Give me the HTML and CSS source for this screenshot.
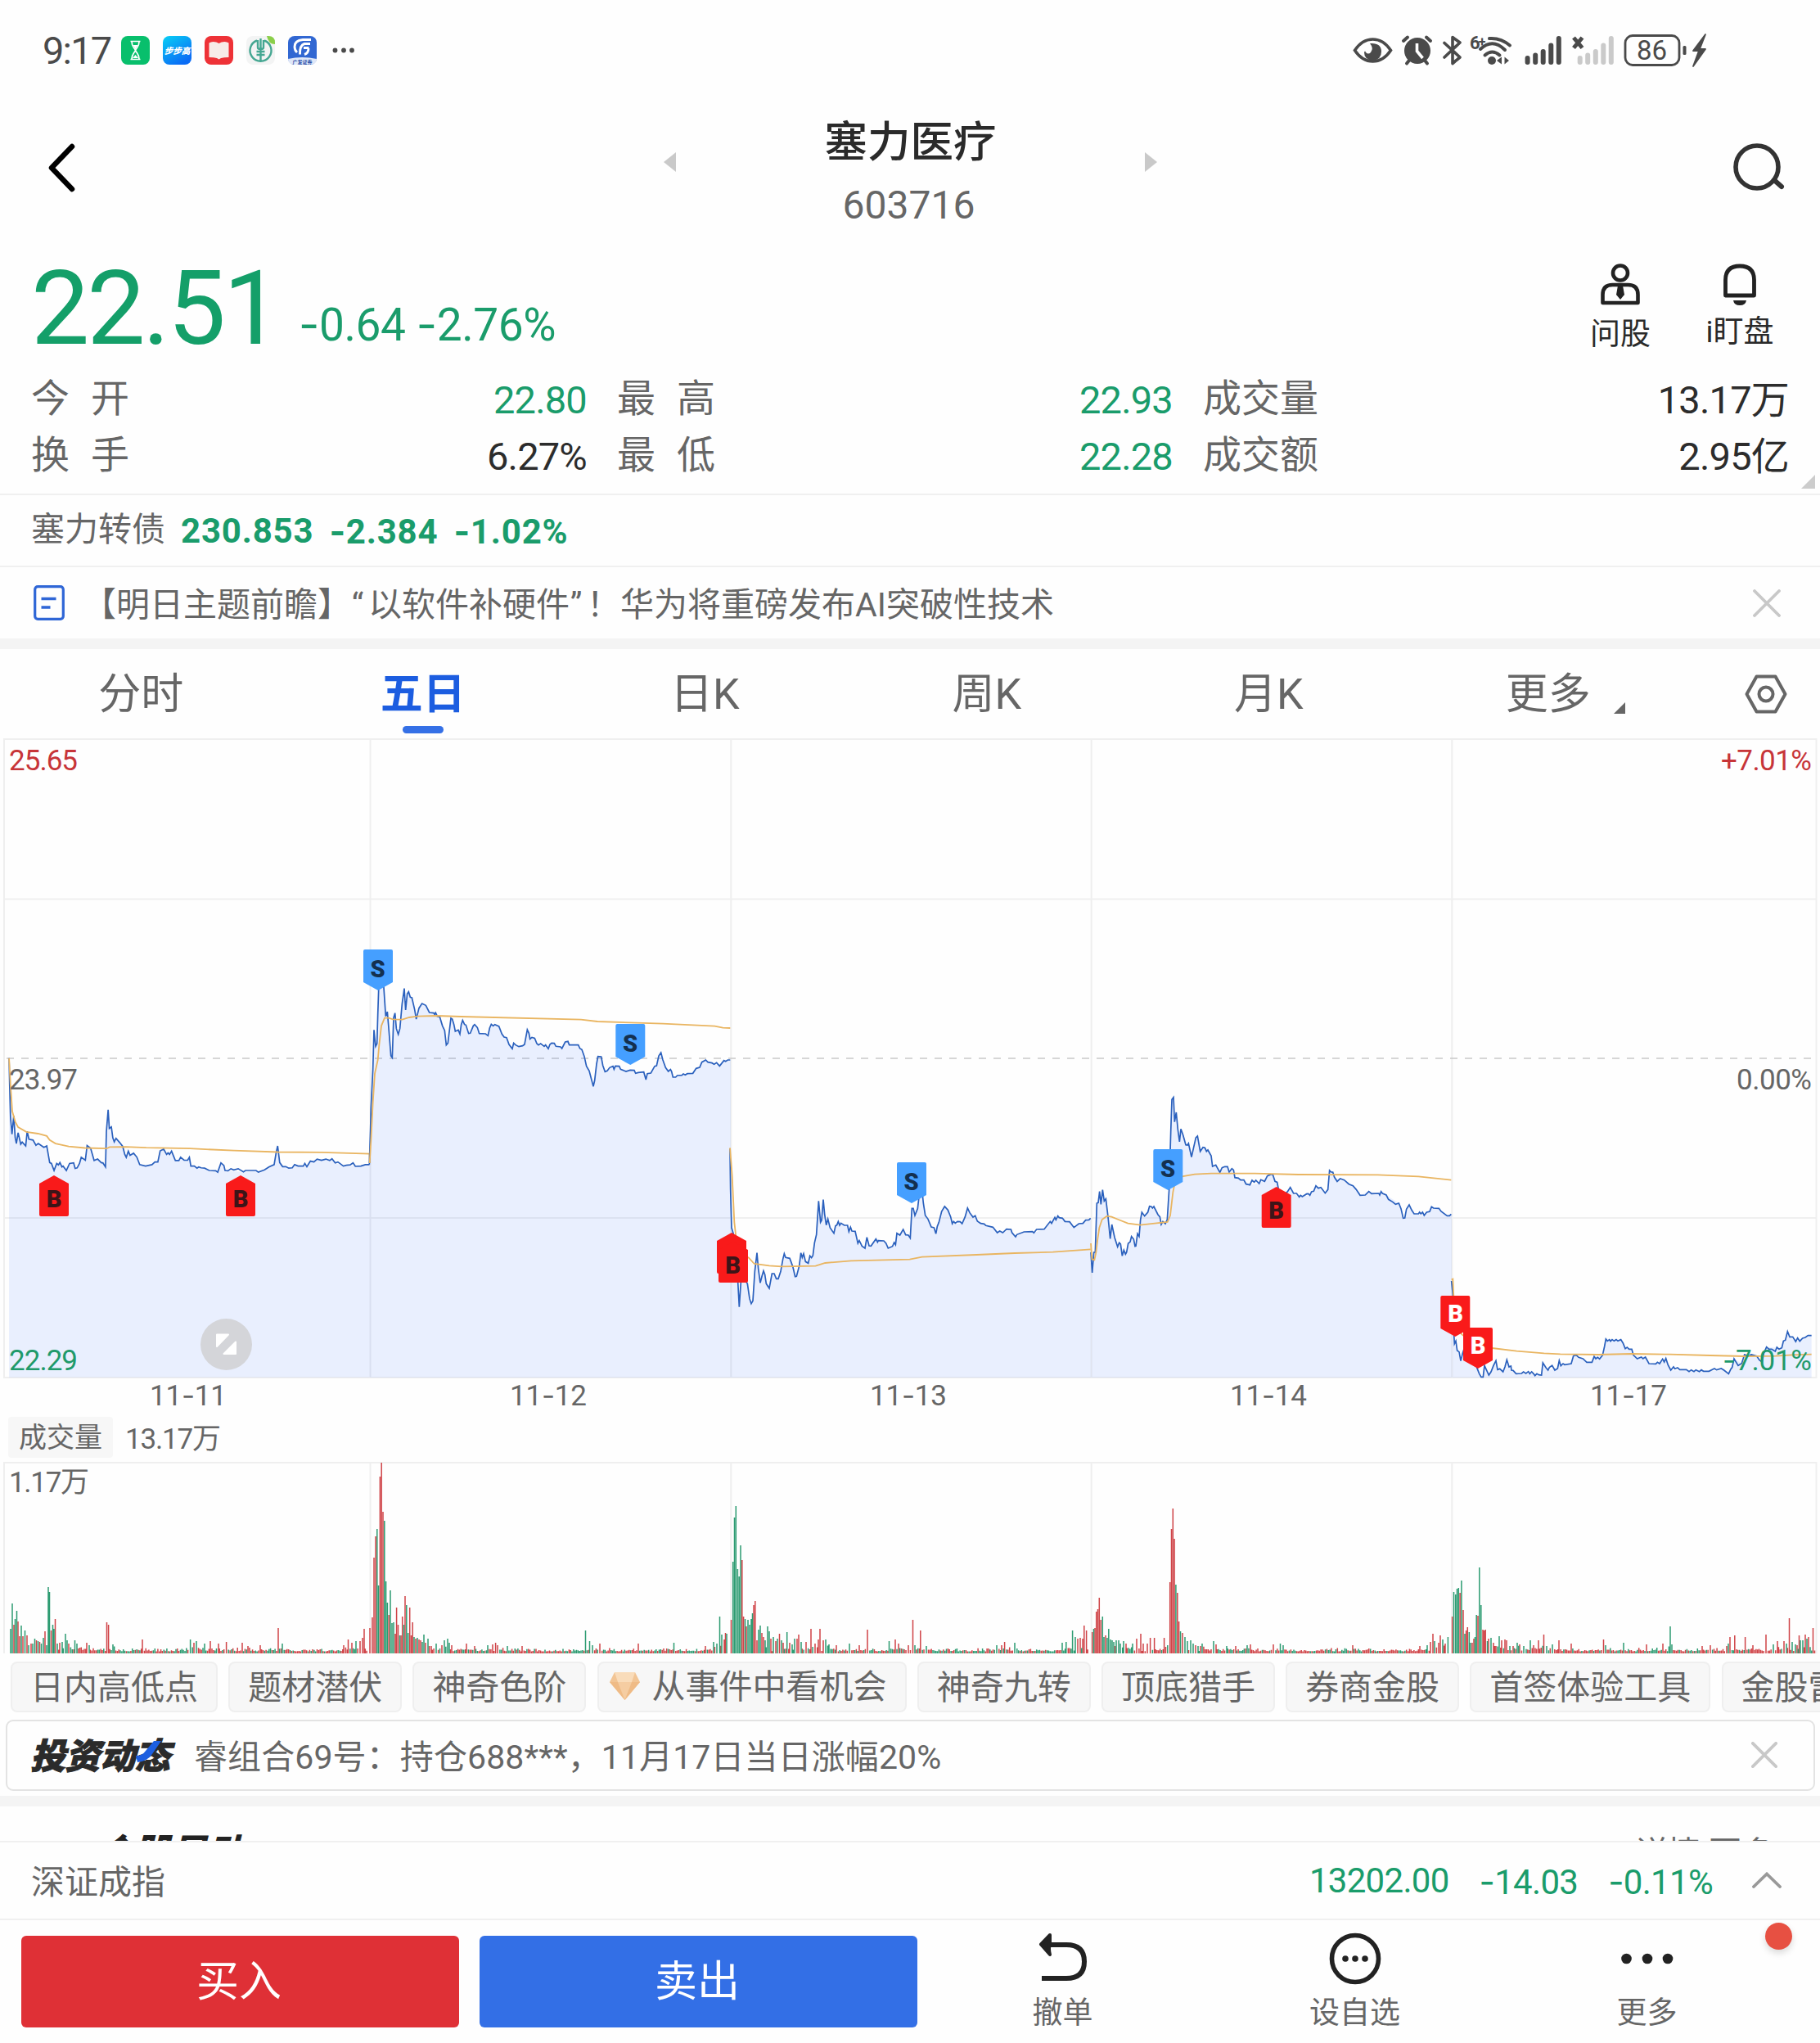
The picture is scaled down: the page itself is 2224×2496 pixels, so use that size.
FILE: index.html
```html
<!DOCTYPE html>
<html lang="zh-CN">
<head>
<meta charset="utf-8">
<title>塞力医疗 603716</title>
<link rel="stylesheet" href="styles.css">
</head>
<body>
<div class="screen">
  <header class="status">
    <span class="time">9:17</span>
    <div class="apps">
      <svg viewBox="0 0 35 35"><rect width="35" height="35" rx="8" fill="#08bf6c"/><path d="M11.5 6.500h12M11.500 28.500h12M13 7c0 6 3 7 4.500 10.500C19 14 22 13 22 7M13 28c0-6 3-7 4.500-10.500C19 21 22 22 22 28" fill="none" stroke="#fff" stroke-width="1.700"/><path d="M14.500 11h6l-3 5zM14 27l3.500-4 3.500 4z" fill="#fff"/></svg>
      <svg viewBox="0 0 35 35"><defs><linearGradient id="bbg" x1="0" y1="0" x2="0.600" y2="1"><stop offset="0" stop-color="#08d0f5"/><stop offset="1" stop-color="#0a6cf5"/></linearGradient></defs><rect width="35" height="35" rx="8" fill="url(#bbg)"/><text x="17.500" y="21.500" text-anchor="middle" class="app-word">步步高</text></svg>
      <svg viewBox="0 0 35 35"><rect width="35" height="35" rx="8" fill="#ee3237"/><path d="M5.500 8.500q2-1.500 5-1.500 4 0 7 2 3-2 7-2 3 0 5 1.500V26q-6 0-9.500 1l-2.500 1.500L15 27q-3.500-1-9.500-1z" fill="#f7ece8"/></svg>
      <svg viewBox="0 0 35 35"><rect width="35" height="35" rx="8" fill="#f3f4f4"/><path d="M25 0h2q8 0 8 8v2q-8 0-10-10z" fill="#8bcf4a"/><path d="M13 5.500a13 13 0 1 0 9 0M14 5v9q0 2 3.500 2t3.500-2V5M17.500 3v28M12.500 19h10M12.500 23h10" fill="none" stroke="#45a792" stroke-width="2.400"/></svg>
      <svg viewBox="0 0 35 35"><rect width="35" height="35" rx="8" fill="#3167d2"/><path d="M0 28q17-4 35 0q0 7-8 7H8q-8 0-8-7z" fill="#dfe7f8"/><path d="M28 4.500H18Q8 5.500 8 13q0 4.500 3 7M27 9.500h-7q-6 2-5.500 13M25.500 14.500H19M25 15q0 6-5 7.500" fill="none" stroke="#fff" stroke-width="2.900"/><text x="17.500" y="33.500" text-anchor="middle" class="app-sub">广发证券</text></svg>
      <svg class="ellipsis" viewBox="0 0 30 35"><g fill="#4a4a4a"><circle cx="6.500" cy="17.500" r="2.900"/><circle cx="17" cy="17.500" r="2.900"/><circle cx="27" cy="17.500" r="2.900"/></g></svg>
    </div>
    <svg class="sys" viewBox="1650 40 440 43">
      <g fill="none" stroke="#4a4a4a" stroke-linecap="round">
        <path d="M1655.500 61.500q9-13.500 22-13.500t22 13.500q-9 13.500-22 13.500t-22-13.500z" stroke-width="3.600"/>
        <path d="M1715 50l5-4.500M1748 50l-5-4.500M1719 77.500l4-5M1744 77.500l-4-5" stroke-width="4"/>
        <path d="M1765 52.500l19 17.500-9 7.500v-32l9 6.500-19 18" stroke-width="3.600" stroke-linejoin="round"/>
        <path d="M1820 47q14-1 25 8.500M1809 60q15-14 30 1M1814.500 67.500q9-8 18 0" stroke-width="4"/>
      </g>
      <path d="M1674 53q14-1 14 10 0 10-10.500 11-10.500-1-10.500-10 1-3 2 0 3 3 6 0 4-5-1-11z" fill="#4a4a4a"/>
      <circle cx="1732" cy="62" r="16" fill="#4a4a4a"/><path d="M1731.500 53v9.500l7 8.500" fill="none" stroke="#fff" stroke-width="3.600"/>
      <circle cx="1823" cy="74" r="5" fill="#4a4a4a"/><path d="M1829 74l6-4.500v9zM1844 74l-5.500-4.500v9z" fill="#4a4a4a"/>
      <text x="1796" y="60" class="wifi-gen">6<tspan dy="-3" class="plus">+</tspan></text>
      <g stroke="#4a4a4a" stroke-width="6" stroke-linecap="round"><path d="M1866.600 71v5M1876.200 67.500v8.500M1885.700 63v13M1895.300 55.500v20.500M1904.800 47v29"/></g>
      <g stroke="#cacaca" stroke-width="6" stroke-linecap="round"><path d="M1930.700 71v5M1940.200 67.500v8.500M1949.800 63v13M1959.300 55.500v20.500M1968.800 47v29"/></g>
      <path d="M1923 46l10.500 12.500M1933.500 46L1923 58.500" stroke="#4a4a4a" stroke-width="5"/>
      <rect x="1986" y="43.500" width="66" height="36" rx="9" fill="none" stroke="#4a4a4a" stroke-width="2.800"/>
      <text x="2018.500" y="73" text-anchor="middle" class="battery">86</text>
      <rect x="2056.500" y="56" width="4" height="11" rx="1.500" fill="#4a4a4a"/>
      <path d="M2084 42l-15 20h7l-7 19 15-21h-7z" fill="#4a4a4a" stroke="#4a4a4a" stroke-width="1.800" stroke-linejoin="round"/>
    </svg>
  </header>

  <nav class="titlebar">
    <svg class="back" viewBox="0 0 40 64"><path d="M31 6L6 32l25 26" fill="none" stroke="#000" stroke-width="6.500" stroke-linecap="round" stroke-linejoin="round"/></svg>
    <div class="stock">
      <svg viewBox="0 0 17 26"><path d="M16 1v24L1 13z" fill="#c9c9c9"/></svg>
      <div class="names"><h1>塞力医疗</h1><p>603716</p></div>
      <svg viewBox="0 0 17 26"><path d="M1 1v24l15-12z" fill="#c9c9c9"/></svg>
    </div>
    <svg class="search" viewBox="0 0 66 60"><circle cx="30" cy="30" r="26" fill="none" stroke="#333" stroke-width="5.600"/><path d="M51 46l9 8" stroke="#333" stroke-width="6" stroke-linecap="round"/></svg>
  </nav>

  <section class="quote">
    <div class="price green">
      <strong>22.51</strong>
      <span><i class="dash">-</i>0.64 <i class="dash">-</i>2.76%</span>
    </div>
    <div class="actions">
      <div class="action ask"><svg viewBox="0 0 48 51"><g fill="none" stroke="#222" stroke-width="4.600"><circle cx="24" cy="11.500" r="9"/><path d="M2.500 48V38q0-12 12-12h19q12 0 12 12v10z" stroke-linejoin="round"/></g><path d="M21 27h6l2 11-5 6-5-6z" fill="#222"/></svg><span>问股</span></div>
      <div class="action"><svg viewBox="0 0 40 51"><path d="M2.500 39V20Q2.500 3 20 3t17.500 17v19z" fill="none" stroke="#222" stroke-width="4.800" stroke-linejoin="round"/><path d="M12 45h16q-1 6-8 6t-8-6z" fill="#222"/></svg><span>i盯盘</span></div>
    </div>
  </section>

  <section class="stats">
    <div class="stat"><span class="label two">今开</span><span class="green">22.80</span></div>
    <div class="stat"><span class="label two">最高</span><span class="green">22.93</span></div>
    <div class="stat"><span class="label">成交量</span><span>13.17万</span></div>
    <div class="stat"><span class="label two">换手</span><span>6.27%</span></div>
    <div class="stat"><span class="label two">最低</span><span class="green">22.28</span></div>
    <div class="stat"><span class="label">成交额</span><span>2.95亿</span></div>
    <svg class="corner" viewBox="0 0 17 17"><path d="M17 0v17H0z" fill="#ccc"/></svg>
  </section>

  <section class="bond"><span>塞力转债</span><b>230.853</b><b><i class="dash">-</i>2.384</b><b><i class="dash">-</i>1.02%</b></section>

  <section class="headline">
    <svg class="doc" viewBox="0 0 38 43"><rect x="1.700" y="1.700" width="34.600" height="39.600" rx="3.500" fill="none" stroke="#2f66d6" stroke-width="3.200"/><path d="M9.500 16.500h18M9.500 27h11" stroke="#2f66d6" stroke-width="3.400"/></svg>
    <p>【明日主题前瞻】<span class="q">“</span>以软件补硬件<span class="q">”</span>！华为将重磅发布AI突破性技术</p>
    <svg class="close" viewBox="0 0 34 34"><path d="M2 2l30 30M32 2L2 32" stroke="#c8c8c8" stroke-width="3.800" stroke-linecap="round"/></svg>
  </section>

  <nav class="tabs">
    <span>分时</span><span class="on">五日</span><span>日K</span><span>周K</span><span>月K</span><span class="more">更多<svg viewBox="0 0 14 14"><path d="M14 0v14H0z" fill="#666"/></svg></span>
    <svg class="hex" viewBox="0 0 52 48"><path d="M14.500 2.500h23L49.500 24l-12 21.500h-23L2.500 24z" fill="none" stroke="#666" stroke-width="4" stroke-linejoin="round"/><circle cx="26" cy="24" r="8.500" fill="none" stroke="#666" stroke-width="4"/></svg>
  </nav>

  <svg class="chart" viewBox="0 902 2224 826">
    <g class="grid"><path d="M5 903H2219.500V1683H5zM5 1098.500H2219M5 1488H2219M452.500 903V1683M893.300 903V1683M1333.700 903V1683M1774.300 903V1683"/></g>
    <path class="zero" d="M8 1293H2219"/>
    <g transform="translate(0 1140) scale(.35714)">
      <path class="area" d="M31,1520 31,428 33,520 36,630 41,688 47,625 52,700 56,720 62,683 71,722 76,715 88,728 93,678 99,705 113,708 123,726 131,720 150,733 160,728 170,785 176,788 185,812 194,788 200,793 205,785 212,800 216,797 227,812 238,788 252,786 257,805 264,803 272,788 278,767 292,777 298,727 310,736 322,778 334,773 347,786 352,786 361,800 364,680 370,604 374,668 381,663 386,700 391,714 397,702 410,717 420,730 427,757 432,767 439,746 445,760 457,753 468,766 478,792 498,797 520,792 530,783 540,783 548,745 560,739 570,757 587,746 600,778 612,778 618,767 630,777 642,777 648,767 653,797 665,797 688,803 716,812 738,813 745,818 756,786 766,795 770,812 833,817 876,812 884,818 905,810 920,800 938,792 945,750 950,728 957,785 967,799 1000,803 1008,792 1050,799 1062,780 1085,773 1136,772 1147,786 1175,797 1266,792V1520z"/>
      <polyline class="price-line" points="31,428 33,520 36,630 41,688 47,625 52,700 56,720 62,683 71,722 76,715 88,728 93,678 99,705 113,708 123,726 131,720 150,733 160,728 170,785 176,788 185,812 194,788 200,793 205,785 212,800 216,797 227,812 238,788 252,786 257,805 264,803 272,788 278,767 292,777 298,727 310,736 322,778 334,773 347,786 352,786 361,800 364,680 370,604 374,668 381,663 386,700 391,714 397,702 410,717 420,730 427,757 432,767 439,746 445,760 457,753 468,766 478,792 498,797 520,792 530,783 540,783 548,745 560,739 570,757 575,752 580,757 587,746 600,778 612,778 618,767 630,777 642,777 648,767 653,797 665,797 674,804 680,800 688,803 700,804 716,812 738,813 745,818 756,786 766,795 770,812 780,813 790,806 800,810 815,806 833,817 840,812 876,812 884,818 905,810 920,800 938,792 945,750 950,728 957,785 967,799 978,799 988,804 1000,803 1008,792 1020,797 1038,797 1043,788 1050,799 1062,780 1074,783 1085,773 1100,777 1115,773 1128,778 1136,772 1147,786 1156,783 1175,797 1185,794 1198,793 1208,786 1216,798 1235,797 1250,792 1264,792"/>
      <polyline class="avg-line" points="31,428 36,520 42,610 52,645 62,664 90,680 130,686 160,694 170,708 190,720 235,730 290,735 365,737 375,732 430,731 500,734 650,737 800,744 950,749 1100,750 1264,755 1265,787"/>
    </g>
    <g transform="translate(430 1140) scale(.33333)">
      <path class="area" d="M66,1629 66,848 68,720 70,640 77,500 81,355 87,415 92,405 95,300 99,180 105,100 112,130 117,200 124,305 130,288 136,360 143,450 148,457 153,310 158,293 163,350 170,371 176,350 184,260 192,203 197,282 203,222 208,215 214,235 220,237 230,280 236,315 246,275 257,258 271,265 284,291 300,293 313,305 322,307 332,340 340,357 346,410 352,403 363,312 368,315 374,335 379,360 390,355 396,370 401,335 406,320 418,337 428,368 434,367 445,340 450,335 460,346 467,368 490,369 499,376 505,348 511,334 539,342 550,370 567,383 576,408 588,424 593,403 612,416 633,408 643,354 653,388 670,385 684,410 720,424 732,403 742,404 748,415 770,423 782,399 792,397 797,410 830,410 843,427 852,452 860,488 870,505 885,562 890,540 897,480 902,452 914,453 920,485 928,508 957,488 980,488 985,499 1035,503 1040,514 1070,509 1078,537 1083,515 1096,513 1110,488 1117,486 1125,450 1133,438 1140,465 1150,493 1172,507 1177,528 1210,521 1250,514 1262,496 1275,492 1283,473 1297,465 1320,476 1348,487 1364,467 1389,465V1629z"/>
      <polyline class="price-line" points="64,848 68,720 70,640 77,500 81,355 87,415 92,405 95,300 99,180 105,100 112,130 117,200 124,305 130,288 136,360 143,450 148,457 153,310 158,293 163,350 170,371 176,350 184,260 192,203 197,282 203,222 208,215 214,235 220,237 230,280 236,315 246,275 257,258 271,265 284,291 300,293 303,298 307,292 313,305 322,307 332,340 340,357 346,410 352,403 363,312 368,315 374,335 379,360 390,355 396,370 401,335 406,320 413,335 418,337 428,368 434,367 445,340 450,335 460,346 467,368 490,369 499,376 505,348 511,334 518,340 524,335 539,342 550,370 558,381 567,383 576,408 588,424 593,403 600,410 612,416 626,413 633,408 643,354 649,367 653,388 660,382 670,385 678,405 684,410 692,405 705,415 710,410 720,424 726,408 732,403 742,404 748,415 765,417 770,423 782,399 792,397 797,410 830,410 836,423 843,427 852,452 860,488 870,505 885,562 890,540 897,480 902,452 914,453 920,485 928,508 936,505 945,493 957,488 961,499 966,487 980,488 985,499 1005,507 1020,502 1035,503 1040,514 1050,511 1070,509 1078,537 1083,515 1096,513 1110,488 1117,486 1125,450 1133,438 1140,465 1150,493 1160,507 1168,500 1172,507 1177,528 1187,528 1193,522 1210,521 1215,516 1222,520 1230,515 1250,514 1262,496 1275,492 1283,473 1297,465 1305,473 1320,476 1328,481 1337,475 1348,487 1364,467 1370,470 1378,465 1387,465"/>
      <polyline class="avg-line" points="65,843 70,760 77,620 84,515 95,465 100,410 108,340 120,311 135,311 150,316 185,317 210,309 240,305 310,303 400,306 840,317 900,324 1140,332 1330,341 1360,347 1387,348"/>
    </g>
    <g transform="translate(860 1320) scale(.33333)">
      <path class="area" d="M99,1089 99,400 102,540 108,560 118,600 124,720 130,830 136,740 140,720 150,730 160,745 168,800 174,818 180,808 187,700 195,632 200,690 207,742 219,698 229,745 240,762 250,708 258,708 273,727 282,700 290,655 295,635 300,649 315,652 327,685 335,719 340,718 350,680 356,632 361,649 366,635 373,664 383,670 389,643 400,642 406,595 413,565 421,442 428,520 432,513 438,437 443,490 449,530 455,508 463,540 477,560 483,533 493,517 503,523 527,531 532,554 555,553 565,597 591,615 598,575 606,606 613,607 631,581 660,588 676,615 692,608 703,602 708,560 719,567 731,546 757,578 763,469 768,469 774,495 784,470 792,400 800,400 805,450 812,495 834,537 851,562 862,520 872,480 883,462 895,475 911,525 947,525 958,500 967,468 975,485 1003,516 1060,538 1076,558 1096,558 1126,546 1143,573 1174,555 1210,559 1248,545 1270,517 1298,497 1341,518 1357,539 1400,512 1420,505V1089z"/>
      <polyline class="price-line" points="96,250 98,400 102,540 108,560 118,600 124,720 130,830 136,740 140,720 150,730 160,745 168,800 174,818 180,808 187,700 195,632 200,690 207,742 214,715 219,698 224,712 229,745 240,762 250,708 258,708 266,727 273,727 282,700 290,655 295,635 300,649 315,652 320,665 327,685 335,719 340,718 350,680 356,632 361,649 366,635 373,664 383,670 389,643 395,650 400,642 406,595 413,565 421,442 428,520 432,513 438,437 443,490 449,530 455,508 463,540 477,560 483,533 488,530 493,517 498,531 503,523 515,531 527,531 532,554 538,538 543,552 555,553 565,597 570,587 580,607 591,615 598,575 606,606 613,607 631,581 637,593 640,587 660,588 668,597 676,615 692,608 698,594 703,602 708,560 719,567 731,546 740,566 750,567 757,578 763,469 768,469 774,495 784,470 792,400 800,400 805,450 812,495 822,508 834,537 844,540 851,562 856,535 862,520 872,480 883,462 895,475 905,500 911,525 916,517 922,523 930,517 940,518 947,525 958,500 967,468 975,485 987,501 995,496 1003,516 1015,524 1028,526 1034,532 1060,538 1076,558 1085,552 1096,558 1110,545 1126,546 1130,558 1143,573 1148,565 1174,555 1205,554 1210,559 1220,546 1248,545 1270,517 1275,524 1287,502 1291,511 1298,497 1303,503 1315,505 1324,517 1341,518 1357,539 1375,525 1390,524 1400,512 1412,511 1418,505"/>
      <polyline class="avg-line" points="96,247 104,350 112,520 120,590 140,635 165,650 185,672 240,679 285,682 410,680 445,669 540,661 755,656 800,647 1000,639 1140,633 1280,629 1418,619"/>
    </g>
    <g transform="translate(1300 1300) scale(.33333)">
      <path class="area" d="M101,1149 101,720 104,765 110,690 115,690 121,510 126,508 131,467 136,514 142,461 148,502 154,494 162,560 170,640 176,588 186,635 197,670 208,660 214,703 220,682 230,690 236,657 248,632 261,668 264,667 270,622 276,632 281,570 286,543 296,557 314,521 330,522 352,560 357,588 372,585 379,570 386,460 392,250 396,130 402,122 406,212 412,177 418,240 424,285 429,238 447,296 457,291 468,341 476,305 490,264 500,320 510,305 528,315 540,336 545,375 557,370 572,397 590,376 600,376 606,396 616,383 627,416 660,425 682,443 716,438 746,410 766,405 782,433 788,465 800,480 830,452 842,474 863,487 902,481 924,446 958,473 968,460 974,390 986,396 1002,430 1028,425 1060,446 1086,481 1118,467 1182,480 1228,510 1244,565 1250,564 1266,516 1284,549 1321,555 1348,523 1375,529 1405,556 1422,550V1149z"/>
      <polyline class="price-line" points="99,690 104,765 110,690 115,690 121,510 126,508 131,467 136,514 142,461 148,502 154,494 162,560 170,640 176,588 186,635 197,670 203,655 208,660 214,703 220,682 226,697 230,690 236,657 243,652 248,632 256,642 261,668 264,667 270,622 276,632 281,570 286,543 296,557 308,543 314,521 320,522 325,528 330,522 345,552 352,560 357,588 363,577 372,585 379,570 386,460 392,250 396,130 402,122 406,212 412,177 418,240 424,285 429,238 437,260 447,296 453,297 457,291 468,341 476,305 484,270 490,264 500,320 510,305 517,307 523,320 528,315 540,336 545,375 557,370 572,397 580,380 590,376 600,376 606,396 616,383 622,388 627,416 640,418 648,425 660,425 668,440 682,443 690,426 698,433 704,426 716,438 722,424 736,430 746,410 758,405 766,405 774,430 782,433 788,465 800,480 812,475 820,468 830,452 842,474 853,474 863,487 868,481 874,486 890,476 896,475 902,481 908,468 916,466 924,446 933,455 942,452 948,460 958,473 968,460 974,390 980,396 986,396 992,415 1002,430 1013,420 1028,425 1045,440 1060,446 1072,460 1086,481 1105,480 1118,467 1128,475 1155,474 1158,480 1163,467 1168,474 1182,480 1190,496 1205,505 1216,514 1228,510 1236,530 1244,565 1250,564 1256,532 1266,516 1275,535 1284,549 1300,549 1304,543 1309,549 1315,543 1321,555 1330,543 1341,541 1348,523 1355,528 1375,529 1383,540 1405,556 1414,556 1420,550"/>
      <polyline class="avg-line" points="99,657 103,715 112,718 118,690 124,640 130,600 140,570 158,557 175,560 200,570 235,584 280,590 340,583 380,579 390,555 400,470 408,430 437,411 480,404 540,401 700,401 860,405 1150,406 1300,412 1420,425"/>
    </g>
    <g transform="translate(1740 1540) scale(.33333)">
      <path class="area" d="M103,429 103,85 106,125 110,270 112,305 122,330 135,368 142,340 155,300 175,330 195,395 210,427 217,427 222,385 238,420 255,385 264,367 270,400 290,408 304,364 321,402 338,415 402,415 431,420 436,375 455,402 490,396 496,367 502,386 540,378 548,350 558,346 597,373 616,373 624,352 655,347 667,288 722,290 738,323 762,325 768,347 812,354 825,378 864,378 887,359 905,402 1045,406 1100,402 1117,415 1137,360 1165,377 1175,345 1220,350 1240,372 1256,317 1312,320 1333,260 1341,280 1363,297 1408,275 1421,275V429z"/>
      <polyline class="price-line" points="101,75 106,125 110,270 112,305 117,295 122,330 129,335 135,368 142,340 155,300 175,330 195,395 203,415 210,427 217,427 222,385 238,420 246,408 255,385 264,367 270,400 278,397 290,408 297,390 304,364 312,390 319,387 321,402 327,403 338,415 358,414 365,408 374,414 383,407 388,415 395,408 402,415 407,422 414,415 421,419 431,420 436,375 447,392 455,402 460,392 470,385 480,402 490,396 496,367 502,386 510,378 516,382 540,378 548,350 558,346 567,355 583,360 597,373 616,373 624,352 630,360 637,355 644,361 655,347 662,315 667,288 673,295 680,290 684,296 690,290 697,295 705,290 711,295 722,290 730,303 738,323 745,318 752,325 762,325 768,347 782,360 797,354 803,360 812,354 825,378 850,379 856,373 864,378 875,361 881,372 887,359 895,383 905,402 915,390 920,397 930,393 938,400 962,400 972,407 980,401 990,407 997,401 1010,407 1017,401 1025,406 1045,406 1065,396 1073,401 1090,396 1100,402 1117,415 1125,398 1130,392 1137,360 1152,385 1165,377 1175,345 1190,350 1200,345 1220,350 1230,365 1240,372 1246,340 1256,317 1265,325 1275,325 1288,333 1294,318 1302,325 1312,320 1318,295 1325,292 1333,260 1341,280 1352,280 1363,297 1370,284 1378,296 1388,285 1398,282 1408,275 1421,275"/>
      <polyline class="avg-line" points="101,70 106,68 112,200 125,255 140,272 180,300 250,321 340,332 440,340 500,343 640,345 760,342 900,344 1050,348 1175,351 1290,350 1350,346 1421,344"/>
    </g>
    <g class="axis">
      <text class="up" x="11" y="941" textLength="84">25.65</text>
      <text x="11" y="1331" textLength="84">23.97</text>
      <text class="down" x="11" y="1674" textLength="84">22.29</text>
      <text class="up" x="2103" y="941" textLength="111">+7.01%</text>
      <text x="2122" y="1331" textLength="92">0.00%</text>
      <text class="down" x="2105" y="1674" textLength="109"><tspan class="dash">-</tspan>7.01%</text>
      <text x="183" y="1717" textLength="94">11<tspan class="dash">-</tspan>11</text>
      <text x="623" y="1717" textLength="94">11<tspan class="dash">-</tspan>12</text>
      <text x="1063" y="1717" textLength="94">11<tspan class="dash">-</tspan>13</text>
      <text x="1503" y="1717" textLength="94">11<tspan class="dash">-</tspan>14</text>
      <text x="1943" y="1717" textLength="94">11<tspan class="dash">-</tspan>17</text>
    </g>
    <defs>
      <path id="tag-down" d="M2 0H34Q36 0 36 2V40L18 50 0 40V2Q0 0 2 0z"/>
      <path id="tag-up" d="M18 0L36 10V48Q36 50 34 50H2Q0 50 0 48V10z"/>
    </defs>
    <g class="marks">
      <g fill="#459fff"><use href="#tag-down" x="444" y="1160"/><use href="#tag-down" x="752.300" y="1251"/><use href="#tag-down" x="1096" y="1420"/><use href="#tag-down" x="1409.300" y="1404"/></g>
      <g fill="#f91a1a"><use href="#tag-up" x="48" y="1436"/><use href="#tag-up" x="276" y="1436"/><use href="#tag-up" x="876" y="1506"/><use href="#tag-up" x="878" y="1517"/><use href="#tag-up" x="1541.700" y="1450"/><use href="#tag-down" x="1760.300" y="1583"/><use href="#tag-down" x="1788" y="1622"/></g>
      <text class="sell" x="461.500" y="1193.500">S</text><text class="sell" x="770" y="1284.500">S</text><text class="sell" x="1113.500" y="1453.500">S</text><text class="sell" x="1427" y="1437.500">S</text>
      <text class="buy" x="66" y="1475">B</text><text class="buy" x="294" y="1475">B</text><text class="buy" x="895.500" y="1556">B</text><text class="buy" x="1559.700" y="1489">B</text>
      <text class="today" x="1778.500" y="1614.500">B</text><text class="today" x="1806" y="1653.500">B</text>
    </g>
    <circle cx="276.500" cy="1642.500" r="31.500" fill="#d4d5d9"/>
    <path d="M265 1630.500h14l-14 14.500zM288 1639.500v14.500h-14.500z" fill="#fff" stroke="#fff" stroke-width="2" stroke-linejoin="round"/>
  </svg>

  <div class="vol-head"><span class="tag">成交量</span><span class="num">13.17万</span></div>
  <svg class="volume" viewBox="0 1786 2224 235">
    <path class="frame" d="M5 2020V1787H2219.500V2020M452.500 1787V2020M893.300 1787V2020M1333.700 1787V2020M1774.300 1787V2020"/>
    <path id="vol-up" stroke="#cf4347"/>
    <path id="vol-down" stroke="#2c9b71"/>
    <text class="vol-max" x="11" y="1823" textLength="98">1.17万</text>
  </svg>

  <div class="chips">
    <span>日内高低点</span><span>题材潜伏</span><span>神奇色阶</span><span class="vip"><svg viewBox="0 0 37 34"><path d="M6 0h25l6 12-18.500 22L0 12z" fill="#f2c595"/><path d="M6 0h25l-4 12H10z" fill="#f9dcba"/><path d="M0 12h37L18.500 34z" fill="#efbb86"/><path d="M10 12h17l-8.500 22z" fill="#f5cda2"/></svg>从事件中看机会</span><span>神奇九转</span><span>顶底猎手</span><span>券商金股</span><span>首签体验工具</span><span>金股雷达</span>
  </div>

  <div class="feed">
    <div class="feed-logo">投资动态<svg viewBox="0 0 32 28"><path d="M31 0L20 16q-6 9-18 10l-2-8q8 0 12-6L22 0z" fill="#1d5fe0"/></svg></div>
    <p>睿组合69号：持仓688***，11月17日当日涨幅20%</p>
    <svg class="close" viewBox="0 0 34 34"><path d="M2 2l30 30M32 2L2 32" stroke="#c8c8c8" stroke-width="4" stroke-linecap="round"/></svg>
  </div>

  <div class="next"><b>个股异动</b><span>详情 更多</span></div>

  <section class="index"><span class="index-name">深证成指</span><div class="green"><em>13202.00</em><em><i class="dash">-</i>14.03</em><em><i class="dash">-</i>0.11%</em></div><svg viewBox="0 0 36 20"><path d="M2 18L18 2.500 34 18" fill="none" stroke="#999" stroke-width="3.800" stroke-linecap="round"/></svg></section>

  <footer class="trade">
    <button class="buy-btn">买入</button><button class="sell-btn">卖出</button>
    <div class="tool"><svg viewBox="0 0 64 64"><path d="M8 15h28q22 0 22 20.500T36 56H6" fill="none" stroke="#222" stroke-width="6"/><path d="M16 3L5 14.500 16 27q-2-8 0-12z" fill="#222" stroke="#222" stroke-width="4" stroke-linejoin="round"/></svg><span>撤单</span></div>
    <div class="tool"><svg viewBox="0 0 64 64"><circle cx="32" cy="32" r="28.500" fill="none" stroke="#222" stroke-width="5.600"/><g fill="#222"><circle cx="20" cy="32" r="3.800"/><circle cx="32" cy="32" r="3.800"/><circle cx="44" cy="32" r="3.800"/></g></svg><span>设自选</span></div>
    <div class="tool"><svg viewBox="0 0 64 64"><g fill="#222"><circle cx="6.500" cy="32" r="6.300"/><circle cx="32" cy="32" r="6.300"/><circle cx="57" cy="32" r="6.300"/></g></svg><span>更多</span><i class="badge"></i></div>
  </footer>
</div>
<script src="volume.js"></script>
</body>
</html>
```
FILE: volume.js
```js
// Notable minute bars per day: "x height direction" (r = up, g = down).
const days = [
  [12, 449, '13 30 g,15 61 g,17 35 r,18.500 42 g,20.500 52 g,22 39 r,24 21 r,26 34 g,28 21 r,30.500 28 g,33 22 r,35 10 g,38 12 r,40 12 g,42.500 18 g,44.500 16 r,46.500 15 g,48.500 14 r,50.500 12 g,53 19 g,55 27 r,57 10 g,59 81 g,60.500 75 g,62.500 28 r,64.500 35 g,66 30 g,67.500 42 r,70 12 g,73 13 r,76 14 g,80 24 g,82 16 g,84 12 r,91.500 16 g,94 12 g,106 13 r,109 10 g,130.500 38 r,132.600 35 r,138 11 g,174 17 r,232.600 17 g,237 13 r,240 15 g,250 12 g,257 15 r,267 12 r,276.600 14 r,296 13 r,303 9 r,318 10 r,340 31 r,345 12 g,420 10 r,425.500 17 r,430 13 r,435 15 g,440 15 r,443 19 r,445 30 r'],
  [452, 889, '452 31 r,455 44 r,457 117 r,459 143 r,460.800 152 g,462.600 83 g,464.400 216 r,466.200 233 r,468 173 r,469.800 162 g,471.600 88 g,473.400 62 g,475.200 47 r,477 77 g,479 37 g,481 38 g,483 24 r,484.600 56 r,486.500 35 r,488.500 22 g,490 22 r,491.700 45 r,493.500 35 g,495 70 r,496.800 59 g,498.700 25 g,500.700 56 r,502.500 22 r,504.200 38 r,506 20 g,508 18 r,510 19 g,512 17 r,514 16 r,516 14 g,518 23 g,520 13 r,523 18 g,527 9 r,533 12 g,540 10 r,543 16 g,547 18 g,549 13 g,552 10 r,570 12 r,580 9 r,596 10 g,602 11 r,605.600 13 r,608 10 r,620 9 g,638 9 r,715.500 28 g,720.500 15 g,724 10 g,733 12 r,780 12 r,823.500 13 g,862 9 r,872 14 g,876 12 g,879.500 45 g,882 23 g,885 17 r,886.500 25 r,888 24 g'],
  [893, 1330, '893.500 41 r,895.700 112 g,897.500 166 g,899.300 180 g,901.400 103 g,903.200 94 g,905 132 g,906.800 114 r,908.600 45 r,910.500 42 g,912 33 r,914 41 g,916 35 g,918 42 g,919.500 49 g,921 59 r,922.800 64 r,925 16 r,927 29 g,929 34 g,931 25 r,933 20 r,935 16 g,938 33 g,940 27 g,942 18 r,945 20 g,948 15 r,950 18 g,952.500 24 r,955 16 g,957 13 r,961.700 26 g,965 13 r,968 11 g,971 18 g,974 18 r,976 23 r,979 14 g,985 14 r,991 30 r,996 12 r,1000 17 r,1002 30 r,1006 16 r,1009 17 g,1013 11 g,1022 10 r,1038 12 g,1050 10 r,1060 29 r,1086.500 15 g,1094 17 r,1098 12 r,1110 10 r,1115.500 41 r,1118 10 g,1124.800 28 r,1132 9 g,1218 10 g,1224 10 r,1227.600 14 r,1240 13 g,1298 13 g,1302.800 14 g,1310.600 28 g,1314 20 g,1317 18 r,1320 19 r,1323 18 r,1324.800 34 r,1327.600 28 r'],
  [1334, 1770, '1334.700 26 r,1336.500 30 g,1338 31 r,1339.700 51 r,1341.500 54 r,1343.300 68 r,1345.200 41 r,1347.300 45 g,1349 20 g,1351 22 r,1353 19 g,1354.800 30 g,1357 17 g,1359 16 g,1361 14 g,1364 16 g,1367 16 g,1369 12 g,1373 15 g,1376 12 r,1384 12 g,1389 18 r,1394 24 r,1397 12 r,1402 12 r,1405.600 19 r,1410.600 19 r,1422.600 19 r,1424.500 8 r,1429.700 87 r,1431.500 152 r,1433.300 177 r,1435.100 140 r,1436.900 84 g,1438.800 74 r,1440.600 39 r,1442.500 27 g,1445 25 r,1448 20 g,1451 15 g,1455 16 g,1458 12 g,1461 10 r,1464 9 g,1467 9 r,1469 12 g,1483 15 g,1486 11 r,1499 9 g,1510 9 r,1524 10 g,1528 11 r,1556 11 r,1564.500 12 g,1568 10 g,1653 10 r,1735 9 r,1744 10 g,1748 14 r,1751 24 r,1753 15 g,1758 13 r,1760 22 r,1763 17 g,1766 12 r,1769.400 20 g'],
  [1774, 2218, '1774.600 45 r,1776.500 75 g,1778.700 72 g,1780.500 79 g,1782.300 80 g,1784.100 74 r,1785.900 89 g,1788 53 r,1790 24 g,1791.600 28 r,1793.300 32 r,1795.300 26 g,1797 13 g,1799 13 r,1801 18 r,1802.500 20 g,1804.200 47 g,1806 46 r,1807.800 105 g,1809.800 59 g,1812 29 r,1813.600 28 r,1815.200 29 r,1817.500 15 g,1819 18 r,1822 19 g,1825 13 r,1828 9 r,1832 21 g,1835 16 r,1839 17 r,1841 16 r,1845 9 g,1849 9 r,1854 13 g,1857 11 r,1862 9 g,1870 16 g,1874 10 r,1880 16 r,1886.500 23 r,1890 9 g,1897 11 g,1905 16 r,1920 12 r,1959.500 17 r,1962 10 g,1984 13 g,2012 11 r,2032 12 r,2041 33 g,2043 11 g,2080 9 r,2090 10 r,2110 9 r,2112 12 g,2114 20 r,2119.800 22 r,2132.600 20 r,2142 10 r,2158 23 r,2167 11 g,2172 15 r,2180 15 r,2183 12 g,2186.500 43 r,2190 14 g,2194 11 g,2196 10 r,2198.500 22 r,2200 16 g,2203 16 g,2206 23 r,2208 18 g,2210 20 r,2215.500 31 r'],
];

const base = 2020;
const step = 1.836;
let seed = 7;
const rand = () => (seed = (seed * 16807) % 2147483647) / 2147483647;
const paths = { r: '', g: '' };
const bar = (x, h, dir) => { paths[dir] += `M${x.toFixed(1)} ${base}v${-h.toFixed(1)}`; };

for (const [from, to, list] of days) {
  const peaks = list.split(',').map(s => s.split(' ')).map(([x, h, d]) => [+x, +h, d]);
  for (let x = from + 1; x < to; x += step) {
    if (peaks.some(p => Math.abs(p[0] - x) < 1.200)) continue;
    const near = peaks.filter(p => Math.abs(p[0] - x) < 10).length;
    const h = 2.500 + 4.500 * rand() * rand() + near * 0.900 * rand();
    bar(x, h, rand() < 0.620 ? 'r' : 'g');
  }
  peaks.forEach(p => bar(...p));
}
document.getElementById('vol-up').setAttribute('d', paths.r);
document.getElementById('vol-down').setAttribute('d', paths.g);
```
FILE: styles.css
```css
* { box-sizing: border-box; margin: 0; padding: 0; }
body { background: #fff; }
.screen {
  width: 2224px; height: 2496px; overflow: hidden;
  display: flex; flex-direction: column;
  background: #fefefe; color: #666;
  font-family: Roboto, "Noto Sans CJK SC", sans-serif;
}
.screen > * { flex: none; }
svg { display: block; flex: none; }
i, em { font-style: normal; }
.green { color: #1a9c6b; }
.dash { font-family: Inter, sans-serif; }

.status { height: 123px; display: flex; align-items: center; padding: 0 134px 0 52px; color: #4a4a4a; }
.time { font-size: 47px; width: 96px; letter-spacing: -1.8px; }
.apps { display: flex; gap: 16px; }
.apps svg { width: 35px; height: 35px; }
.apps .ellipsis { width: 30px; }
.app-word { font-size: 10.500px; font-weight: 900; fill: #fff; font-style: italic; }
.app-sub { font-size: 6px; font-weight: 700; fill: #2a50a8; }
.sys { width: 440px; height: 43px; margin-left: auto; }
.wifi-gen { font-size: 22px; font-weight: 700; fill: #4a4a4a; letter-spacing: -2px; }
.plus { font-size: 16px; }
.battery { font-size: 33px; fill: #4a4a4a; }

.titlebar { height: 157px; display: flex; justify-content: space-between; padding: 0 41px 0 57px; }
.back { width: 40px; height: 64px; margin-top: 50px; }
.search { width: 66px; height: 60px; margin-top: 51px; }
.stock { display: flex; gap: 180px; padding-left: 11px; }
.stock > svg { width: 17px; height: 26px; margin-top: 62px; }
.names { width: 211px; text-align: center; display: flex; flex-direction: column; }
h1 { font-size: 52.500px; line-height: 76px; font-weight: 500; color: #2a2a2a; margin-top: 13px; white-space: nowrap; }
.names p { font-size: 48px; line-height: 76px; margin: 1px 4px 0 0; }

.quote { height: 174px; display: flex; justify-content: space-between; padding: 0 25px 0 38px; }
.price { display: flex; align-items: baseline; gap: 24px; padding-top: 34px; }
.price strong { font-weight: 400; font-size: 127px; line-height: 126px; letter-spacing: -3.200px; color: #149f69; }
.price span { font-size: 55px; letter-spacing: -.4px; transform: translateY(-4px); }
.actions { display: flex; }
.action { width: 146px; display: flex; flex-direction: column; align-items: center; padding-top: 42px; color: #2a2a2a; font-size: 37px; line-height: 44px; }
.action svg { height: 51px; margin-bottom: 11px; }
.ask svg { margin-bottom: 14px; }

.stats { height: 151px; border-bottom: 2px solid #f0f0f0; padding-left: 38px; position: relative; display: grid; grid-template-columns: 679px 679px 716px; column-gap: 37px; grid-auto-rows: 69px; align-content: start; line-height: 69px; font-size: 47px; color: #2c2c2c; }
.stat { display: flex; justify-content: space-between; }
.label { color: #666; line-height: 66px; }
.stat span:last-child { letter-spacing: -.8px; }
.stats .green { color: #1a9c6b; }
.two { letter-spacing: 26px; }
.corner { position: absolute; right: 6px; bottom: 6px; width: 17px; height: 17px; }

.bond { height: 88px; border-bottom: 2px solid #f0f0f0; display: flex; align-items: center; padding-left: 38px; font-size: 41px; gap: 19px; }
.bond span { line-height: 56px; padding-bottom: 2px; }
.bond b { font-size: 42px; letter-spacing: .8px; color: #1a9c6b; }
.headline { height: 87px; display: flex; align-items: center; padding: 0 48px 0 41px; font-size: 41px; }
.headline p, .feed p { flex: 1; white-space: nowrap; padding-bottom: 4px; }
.doc { width: 38px; height: 43px; margin-right: 22px; margin-bottom: 1px; }
.q { display: inline-block; width: 21px; padding-right: 5px; text-align: center; }
.close { width: 34px; height: 34px; }

.tabs { height: 122px; border-top: 13px solid #f4f4f4; display: flex; align-items: center; font-size: 52px; }
.tabs span { width: 344.500px; height: 109px; line-height: 111px; text-align: center; position: relative; }
.tabs .on { color: #1c5de0; font-weight: 700; }
.tabs .on::after { content: ""; position: absolute; left: 50%; bottom: 6px; width: 50px; height: 9px; margin-left: -25px; border-radius: 5px; background: #3570e6; }
.tabs .more { padding-right: 6px; }
.more svg { position: absolute; width: 14px; height: 14px; left: 249px; top: 65px; }
.hex { width: 52px; height: 48px; margin-left: 65px; }

.chart { width: 2224px; height: 826px; }
.grid path, .frame { fill: none; stroke: #efefef; stroke-width: 2; }
.zero { stroke: #c9c9c9; stroke-width: 1.600; stroke-dasharray: 9 9; }
.area { fill: rgba(51, 112, 255, .1); }
.price-line, .avg-line { fill: none; vector-effect: non-scaling-stroke; }
.price-line { stroke: #2a60bd; stroke-width: 1.700; }
.avg-line { stroke: #e9b561; stroke-width: 1.800; }
.axis text, .vol-max { font-size: 35px; fill: #666; }
.axis .up { fill: #c73539; }
.axis .down { fill: #1f9a6b; }
.marks text { font-size: 29px; font-weight: 900; text-anchor: middle; }
.sell { fill: #14304f; }
.buy { fill: #3d1418; }
.today { fill: #fff; }

.vol-head { height: 58px; display: flex; align-items: center; padding: 2px 0 4px 10px; font-size: 34px; }
.tag { width: 128px; height: 50px; line-height: 51px; text-align: center; background: #f7f7f7; border-radius: 4px; margin-right: 15px; }
.num { font-size: 35px; letter-spacing: -1.2px; padding-bottom: 4px; }
.volume { width: 2224px; height: 235px; }
.volume path:not(.frame) { stroke-width: 1.500; }

.chips { display: flex; gap: 13.200px; padding: 9px 0 0 13px; height: 71px; }
.chips span { flex: none; height: 62px; line-height: 60px; padding: 0 22px; border: 2px solid #efefef; border-radius: 8px; background: #f7f7f7; font-size: 41px; }
.chips .vip { display: flex; align-items: center; padding-left: 13px; }
.vip svg { width: 37px; height: 34px; margin: 0 15px 2px 0; }

.feed { margin: 9px 6px 0 7px; height: 87px; border: 2px solid #e3e3e3; border-radius: 9px; display: flex; align-items: center; padding: 0 44px 0 28px; font-size: 41px; }
.feed p { letter-spacing: .1px; }
.feed-logo { position: relative; font-size: 43px; line-height: 80px; font-weight: 900; font-style: italic; color: #2b2b2b; width: 200px; letter-spacing: -.4px; padding-top: 2px; -webkit-text-stroke: 1px #2b2b2b; }
.feed-logo svg { position: absolute; left: 129px; top: 23px; width: 32px; height: 28px; }
.feed .close { width: 32px; height: 32px; margin-bottom: 1px; }

.next { margin-top: 6px; border-top: 13px solid #f4f4f4; height: 55px; overflow: hidden; display: flex; justify-content: space-between; padding: 35px 56px 0 118px; line-height: 44px; }
.next b { font-size: 45px; font-style: italic; font-weight: 900; color: #222; }
.next span { font-size: 40px; padding-top: 1px; }

.index { height: 97px; border-top: 2px solid #f0f0f0; border-bottom: 2px solid #f0f0f0; display: flex; align-items: center; padding: 0 47px 0 38px; font-size: 41px; }
.index-name { padding-bottom: 3px; }
.index div { margin-left: auto; display: flex; gap: 37px; font-size: 42px; letter-spacing: -.7px; padding-top: 2px; }
.index svg { width: 36px; height: 20px; margin: 0 0 2px 48px; }

.trade { height: 150px; display: grid; grid-template-columns: 535px 535px repeat(3, 357px); padding-left: 26px; column-gap: 25px; align-items: start; }
.trade { grid-template-columns: 535px 535px repeat(3, 357px); column-gap: 0; }
button { height: 112px; margin-top: 19px; border: 0; border-radius: 6px; color: #fff; font: 52px/114px Roboto, "Noto Sans CJK SC", sans-serif; padding-right: 3px; }
.buy-btn { background: #df3036; }
.sell-btn { background: #336fe6; margin-left: 25px; margin-right: -25px; }
.tool { margin-left: 24px; margin-right: -24px; position: relative; display: flex; flex-direction: column; align-items: center; font-size: 37px; line-height: 44px; padding-top: 15px; }
.tool svg { width: 64px; height: 64px; margin-bottom: 13px; }
.badge { position: absolute; left: 323px; top: 3px; width: 33px; height: 33px; border-radius: 50%; background: #e75042; box-shadow: 0 4px 8px rgba(0, 0, 0, .15); }
```
